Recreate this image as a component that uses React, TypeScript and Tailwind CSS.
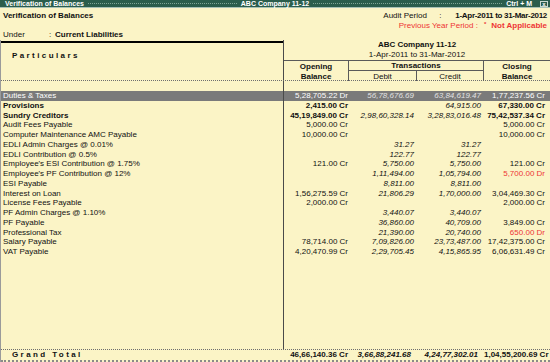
import React from "react";

type Row = {
  name: string;
  open?: string;
  dr?: string;
  cr?: string;
  close?: string;
  bold?: boolean;
  hl?: boolean;
  red?: boolean;
};

const rows: Row[] = [
  { name: "Duties & Taxes", open: "5,28,705.22 Dr", dr: "56,78,676.69", cr: "63,84,619.47", close: "1,77,237.56 Cr", hl: true },
  { name: "Provisions", open: "2,415.00 Cr", cr: "64,915.00", close: "67,330.00 Cr", bold: true },
  { name: "Sundry Creditors", open: "45,19,849.00 Cr", dr: "2,98,60,328.14", cr: "3,28,83,016.48", close: "75,42,537.34 Cr", bold: true },
  { name: "Audit Fees Payable", open: "5,000.00 Cr", close: "5,000.00 Cr" },
  { name: "Computer Maintenance AMC Payable", open: "10,000.00 Cr", close: "10,000.00 Cr" },
  { name: "EDLI Admin Charges @ 0.01%", dr: "31.27", cr: "31.27" },
  { name: "EDLI Contribution @ 0.5%", dr: "122.77", cr: "122.77" },
  { name: "Employee's ESI Contribution @ 1.75%", open: "121.00 Cr", dr: "5,750.00", cr: "5,750.00", close: "121.00 Cr" },
  { name: "Employee's PF Contribution @ 12%", dr: "1,11,494.00", cr: "1,05,794.00", close: "5,700.00 Dr", red: true },
  { name: "ESI Payable", dr: "8,811.00", cr: "8,811.00" },
  { name: "Interest on Loan", open: "1,56,275.59 Cr", dr: "21,806.29", cr: "1,70,000.00", close: "3,04,469.30 Cr" },
  { name: "License Fees Payable", open: "2,000.00 Cr", close: "2,000.00 Cr" },
  { name: "PF Admin Charges @ 1.10%", dr: "3,440.07", cr: "3,440.07" },
  { name: "PF Payable", dr: "36,860.00", cr: "40,709.00", close: "3,849.00 Cr" },
  { name: "Professional Tax", dr: "21,390.00", cr: "20,740.00", close: "650.00 Dr", red: true },
  { name: "Salary Payable", open: "78,714.00 Cr", dr: "7,09,826.00", cr: "23,73,487.00", close: "17,42,375.00 Cr" },
  { name: "VAT Payable", open: "4,20,470.99 Cr", dr: "2,29,705.45", cr: "4,15,865.95", close: "6,06,631.49 Cr" },
];

function LedgerRow({ r }: { r: Row }) {
  const base = r.hl ? "bg-[#7a7a7a] text-white" : "";
  const amt = r.bold ? "font-bold" : "";
  return (
    <div className={`flex h-[9.75px] leading-[9.75px] whitespace-nowrap ${base}`}>
      <div className={`w-[283px] shrink-0 border-r border-[#4a4a4a] pl-[2px] ${r.bold ? "font-bold" : ""}`}>{r.name}</div>
      <div className={`w-[65px] shrink-0 text-right pr-[1px] ${amt}`}>{r.open}</div>
      <div className={`w-[68px] shrink-0 text-right pr-[3px] italic ${r.hl ? "text-[#e2e2e2]" : ""}`}>{r.dr}</div>
      <div className={`w-[67px] shrink-0 text-right pr-[3px] italic ${r.hl ? "text-[#e2e2e2]" : ""}`}>{r.cr}</div>
      <div className={`flex-1 text-right pr-[5px] ${amt} ${r.red ? "text-[#ee3535]" : ""}`}>{r.close}</div>
    </div>
  );
}

export default function App() {
  return (
    <div className="w-[550px] h-[362px] overflow-hidden bg-[#fbf4c6] text-[8px] text-[#111] font-['Liberation_Sans',Arial,sans-serif] flex flex-col">
      {/* title bar */}
      <div className="h-[8px] shrink-0 bg-[#2b5d4c] border-b border-[#a9c2b6] grid grid-cols-[1fr_auto_1fr] items-center text-white font-bold text-[7px] leading-[7px] whitespace-nowrap">
        <div className="flex items-center pl-[5px]">
          <span>Verification of Balances</span>
          <span className="flex-1 mx-[4px] border-t border-dotted border-[#7ea595]" />
        </div>
        <span>ABC Company 11-12</span>
        <div className="flex items-center pr-[2px]">
          <span className="flex-1 mx-[4px] border-t border-dotted border-[#7ea595]" />
          <span>Ctrl + M</span>
          <span className="ml-[8px] w-[8px] h-[6px] border border-[#c8d8d0] flex items-center justify-center text-[6px] leading-[6px]">x</span>
        </div>
      </div>

      {/* info */}
      <div className="h-[32px] shrink-0 pt-[3px] flex flex-col whitespace-nowrap">
        <div className="flex justify-between h-[9.5px] leading-[9.5px]">
          <span className="pl-[3px] font-bold">Verification of Balances</span>
          <div className="flex pr-[3px]">
            <span className="w-[56px]">Audit Period</span>
            <span className="w-[16px]">:</span>
            <span className="font-bold tracking-[-0.3px]">1-Apr-2011 to 31-Mar-2012</span>
          </div>
        </div>
        <div className="flex justify-end h-[9.5px] leading-[9.5px] pr-[3px] text-[#ee3535]">
          <span>Previous Year Period :</span>
          <span className="ml-[6px] mr-[5px] text-[6px] leading-[6px] font-bold">*</span>
          <span className="font-bold">Not Applicable</span>
        </div>
        <div className="flex h-[9.5px] leading-[9.5px] pl-[3px]">
          <span className="w-[46px]">Under</span>
          <span className="w-[6px]">:</span>
          <span className="font-bold">Current Liabilities</span>
        </div>
      </div>

      {/* table */}
      <div className="flex-1 min-h-0 flex flex-col border-l border-[#9a9a9a]">
        {/* header */}
        <div className="h-[41px] shrink-0 flex border-b border-dotted border-[#6e6e6e] whitespace-nowrap">
          <div className="w-[283px] shrink-0 border-r border-[#4a4a4a] flex flex-col">
            <div className="h-px" />
            <div className="h-[2px] bg-black" />
            <div className="pt-[8px] pl-[11px] font-bold tracking-[2.4px] leading-[9px]">Particulars</div>
          </div>
          <div className="flex-1 flex flex-col">
            <div className="h-[21px] shrink-0 border-b border-[#5a5a5a] flex flex-col items-center">
              <span className="font-bold leading-[9px]">ABC Company 11-12</span>
              <span className="leading-[9px] mt-px">1-Apr-2011 to 31-Mar-2012</span>
            </div>
            <div className="flex-1 flex">
              <div className="w-[65px] shrink-0 border-r border-[#5a5a5a] flex flex-col items-center font-bold leading-[9.5px] pt-px">
                <span>Opening</span>
                <span>Balance</span>
              </div>
              <div className="w-[135px] shrink-0 border-r border-[#5a5a5a] flex flex-col">
                <div className="h-[10px] border-b border-[#5a5a5a] flex items-center justify-center font-bold leading-[9px]">Transactions</div>
                <div className="flex-1 flex leading-[9px]">
                  <div className="w-[68px] border-r border-[#5a5a5a] flex items-center justify-center">Debit</div>
                  <div className="flex-1 flex items-center justify-center">Credit</div>
                </div>
              </div>
              <div className="flex-1 flex flex-col items-center font-bold leading-[9.5px] pt-px">
                <span>Closing</span>
                <span>Balance</span>
              </div>
            </div>
          </div>
        </div>

        {/* body */}
        <div className="flex-1 min-h-0 flex flex-col">
          <div className="h-[10px] shrink-0 flex">
            <div className="w-[283px] border-r border-[#4a4a4a]" />
          </div>
          {rows.map((r) => (
            <LedgerRow key={r.name} r={r} />
          ))}
          <div className="flex-1 flex">
            <div className="w-[283px] border-r border-[#4a4a4a]" />
          </div>
        </div>

        {/* grand total */}
        <div className="h-[13px] shrink-0 flex items-center border-t border-dotted border-[#6e6e6e] border-b-2 border-b-[#8a8a8a] font-bold whitespace-nowrap leading-[10px]">
          <div className="w-[283px] shrink-0 pl-[11px] tracking-[2.4px]">Grand Total</div>
          <div className="w-[65px] shrink-0 text-right pr-[1px]">46,66,140.36 Cr</div>
          <div className="w-[68px] shrink-0 text-right pr-[6px] italic">3,66,88,241.68</div>
          <div className="w-[67px] shrink-0 text-right pr-[6px] italic">4,24,77,302.01</div>
          <div className="flex-1 text-right pr-[5px]">1,04,55,200.69 Cr</div>
        </div>
      </div>
    </div>
  );
}
